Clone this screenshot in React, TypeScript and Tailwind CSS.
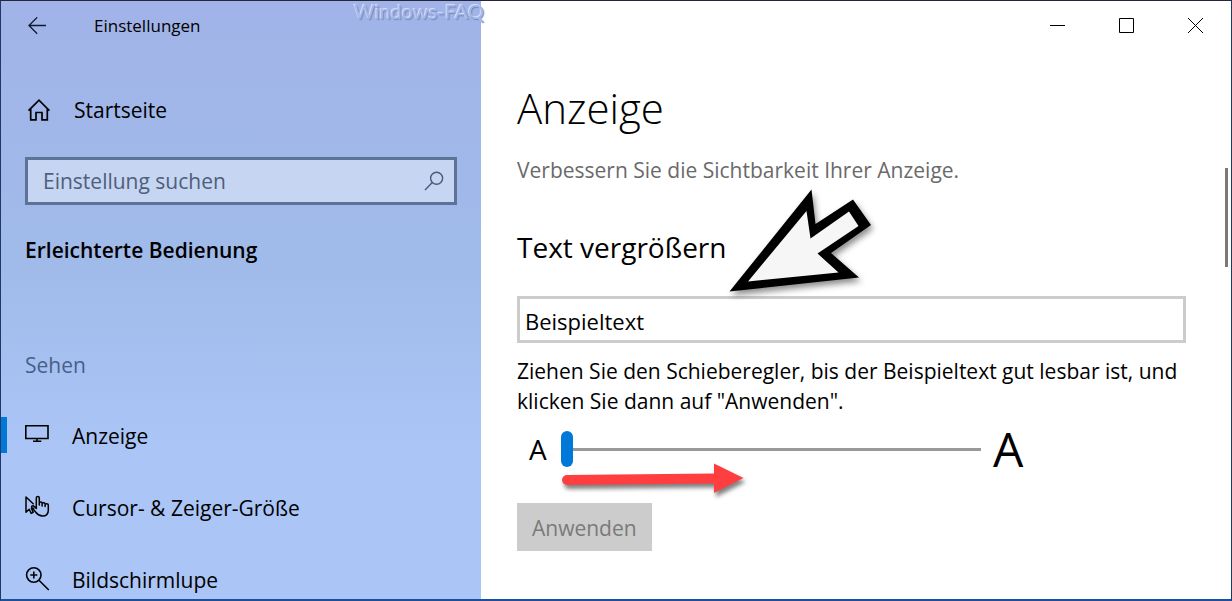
import { useState, type ReactNode } from "react";

function BackIcon() {
  return (
    <svg width="20" height="18" viewBox="0 0 20 18" fill="none" stroke="#10192b" strokeWidth="1.3">
      <path d="M19 8.500H1.500M10.200.4 2 8.500l8.200 8.200" />
    </svg>
  );
}

function HomeIcon() {
  return (
    <svg width="24" height="24" viewBox="0 0 24 24" fill="none" stroke="#000" strokeWidth="1.7">
      <path d="M2.500 12.600 13 2.200l10.500 10.400M4.700 10.500v11.300h5.300v-7.300h6v7.300h5.300V10.500" />
    </svg>
  );
}

function SearchIcon() {
  return (
    <svg width="20" height="20" viewBox="0 0 20 20" fill="none" stroke="#4a5a78" strokeWidth="1.4">
      <circle cx="12.600" cy="7.300" r="6" />
      <path d="M8.300 11.600 1 19" />
    </svg>
  );
}

function MonitorIcon() {
  return (
    <svg width="25" height="24" viewBox="0 0 25 24" fill="none" stroke="#000" strokeWidth="1.600">
      <path d="M.8 2.800h22.200v12.700H.8zM12 15.500v2.700M8 18.300h8.300" />
    </svg>
  );
}

function PointerIcon() {
  return (
    <svg width="25" height="24" viewBox="0 0 25 24" fill="none" stroke="#000" strokeWidth="1.500" strokeLinejoin="round">
      <path d="M8.700 9.200 1 2v15.200l3.200-3 2 4.200 2-1-1.700-4 2.800-.2" />
      <path d="M11.300 13.500V3c0-2 3-2 3 0v7-2c0-1.500 2.800-1.400 2.800.2V11 8.700c0-1.500 3-1.400 3 .2v2.600V9.800c0-1.500 3.200-1.400 3.200.2v5.200c0 3.500-2.300 5.800-5.800 5.800-3.200 0-4.800-1.300-6.500-3.500l-4-4.800c-1-1.300.4-2.500 1.700-1.700z" />
    </svg>
  );
}

function MagnifierIcon() {
  return (
    <svg width="25" height="25" viewBox="0 0 25 25" fill="none" stroke="#000" strokeWidth="1.600">
      <circle cx="8.800" cy="8" r="7.200" />
      <path d="m14 13.200 9.800 9.800M8.800 4.500v7M5.300 8h7" />
    </svg>
  );
}

function WindowButton({ label, d }: { label: string; d: string }) {
  return (
    <button type="button" aria-label={label} className="flex h-[49px] w-[69px] items-center justify-center">
      <svg width="15" height="15" viewBox="0 0 15 15" fill="none" stroke="#000" strokeWidth="1">
        <path d={d} />
      </svg>
    </button>
  );
}

function NavItem({ icon, label, active = false }: { icon: ReactNode; label: string; active?: boolean }) {
  return (
    <li>
      <a href="#" aria-current={active ? "page" : undefined} className="flex h-[72px] items-center">
        <span className={active ? "h-9 w-[6px] bg-[#0078d7]" : "h-9 w-[6px]"} />
        <span className="ml-[18px] flex w-[47px] items-center">{icon}</span>
        <span className="pt-[2px]">{label}</span>
      </a>
    </li>
  );
}

function PointingArrow() {
  return (
    <svg
      aria-hidden="true"
      className="pointer-events-none absolute -top-[45px] left-[206px] drop-shadow-[2px_4px_3px_rgba(0,0,0,0.45)]"
      width="160"
      height="120"
      viewBox="0 0 160 120"
    >
      <path d="M6.500 109.500 88.500 7.500 92.500 42 130 17.500 148 43 108 71 136 95.500z" fill="#000" />
      <path d="M25 99.500 83.500 29l4 27.500L126 29.500l9.500 14.500L94.500 71.500 115.500 90.500z" fill="#f6f6f6" />
    </svg>
  );
}

function DragArrow() {
  return (
    <svg
      aria-hidden="true"
      className="pointer-events-none absolute top-[31px] left-0 drop-shadow-[2px_4px_2px_rgba(0,0,0,0.5)]"
      width="190"
      height="36"
      viewBox="0 0 190 36"
    >
      <path d="M6 13 153 11.500V1.500l29.500 14.500L153 31V21.500L6 23a5 5 0 0 1 0-10z" fill="#ff3f3f" />
    </svg>
  );
}

export default function App() {
  const [size, setSize] = useState(0);

  return (
    <div className="relative flex h-screen overflow-hidden border-x border-t border-b-2 border-x-[#1f3864] border-t-[#232838] border-b-[#1c4f9c] bg-white font-['Open_Sans','Noto_Sans',sans-serif] text-[21px] leading-[30px] text-black">
      <aside className="flex w-[480px] shrink-0 flex-col overflow-hidden bg-linear-to-b from-[#a1b3e8] via-[#a0bbea] via-45% to-[#abc6f6] to-75%">
        <header className="flex h-[49px] shrink-0 items-center pl-[26px]">
          <button type="button" aria-label="Zurück" className="w-[67px]">
            <BackIcon />
          </button>
          <span className="text-[17px]">Einstellungen</span>
        </header>
        <a href="#" className="mt-9 flex h-12 shrink-0 items-center pl-[25px]">
          <span className="w-12">
            <HomeIcon />
          </span>
          Startseite
        </a>
        <label className="mx-6 mt-[23px] flex h-12 shrink-0 items-center border-[3px] border-[#5d7396] bg-[#c6d5f1] pr-[10px] pl-[15px]">
          <input
            type="text"
            aria-label="Einstellung suchen"
            placeholder="Einstellung suchen"
            className="min-w-0 flex-1 bg-transparent outline-none placeholder:text-[#4e5f7c]"
          />
          <SearchIcon />
        </label>
        <h2 className="mt-[30px] ml-6 font-semibold">Erleichterte Bedienung</h2>
        <h3 className="mt-[85px] ml-6 text-[#46608a]">Sehen</h3>
        <nav className="mt-[19px] min-h-0">
          <ul>
            <NavItem icon={<MonitorIcon />} label="Anzeige" active />
            <NavItem icon={<PointerIcon />} label="Cursor- &amp; Zeiger-Größe" />
            <NavItem icon={<MagnifierIcon />} label="Bildschirmlupe" />
          </ul>
        </nav>
      </aside>

      <span
        aria-hidden="true"
        className="pointer-events-none absolute top-0 left-[353px] font-[Lato,sans-serif] text-[20px] leading-[20px] whitespace-nowrap text-[#a3b6e8] [text-shadow:-1px_-1px_0_#d3def8,1px_1px_1px_#7488bd]"
      >
        Windows-FAQ
      </span>

      <main className="flex min-w-0 flex-1 flex-col">
        <div className="flex shrink-0 justify-end pr-px">
          <WindowButton label="Minimieren" d="M0 7.500h15" />
          <WindowButton label="Maximieren" d="M.5 .5h14v14H.5z" />
          <WindowButton label="Schließen" d="m0 0 15 15M15 0 0 15" />
        </div>
        <div className="pr-[45px] pl-9">
          <h1 className="mt-7 text-[42px] leading-[60px] font-light">Anzeige</h1>
          <p className="mt-[17px] text-[#6a6a6a]">Verbessern Sie die Sichtbarkeit Ihrer Anzeige.</p>
          <div className="relative mt-[42px]">
            <h2 className="text-[28px] leading-[40px]">Text vergrößern</h2>
            <PointingArrow />
          </div>
          <input
            type="text"
            aria-label="Beispieltext"
            defaultValue="Beispieltext"
            className="mt-[29px] block h-[47px] w-full border-[3px] border-[#ccc] px-[5px] pt-[3px] text-[22px] outline-none"
          />
          <p className="mt-[13px]">
            Ziehen Sie den Schieberegler, bis der Beispieltext gut lesbar ist, und klicken Sie dann auf "Anwenden".
          </p>
          <div className="mt-3 flex h-[42px] items-center">
            <span className="w-11 pl-3 text-[28px]">A</span>
            <div className="relative flex h-9 w-[420px] items-center">
              <input
                type="range"
                aria-label="Textgröße"
                min={0}
                max={100}
                value={size}
                onChange={(e) => setSize(Number(e.target.value))}
                className="h-9 w-full appearance-none bg-transparent outline-none [&::-webkit-slider-runnable-track]:h-[3px] [&::-webkit-slider-runnable-track]:bg-[#999] [&::-webkit-slider-thumb]:-mt-[17px] [&::-webkit-slider-thumb]:h-9 [&::-webkit-slider-thumb]:w-3 [&::-webkit-slider-thumb]:appearance-none [&::-webkit-slider-thumb]:rounded-full [&::-webkit-slider-thumb]:bg-[#0078d7]"
              />
              <DragArrow />
            </div>
            <span className="pl-3 text-[48px]">A</span>
          </div>
          <button type="button" disabled className="mt-[33px] h-12 bg-[#ccc] px-[15px] pt-[2px] text-[#7a7a7a]">
            Anwenden
          </button>
        </div>
      </main>

      <div aria-hidden="true" className="absolute top-[167px] right-[3px] h-[99px] w-[3px] bg-[#7a7a7a]" />
    </div>
  );
}
